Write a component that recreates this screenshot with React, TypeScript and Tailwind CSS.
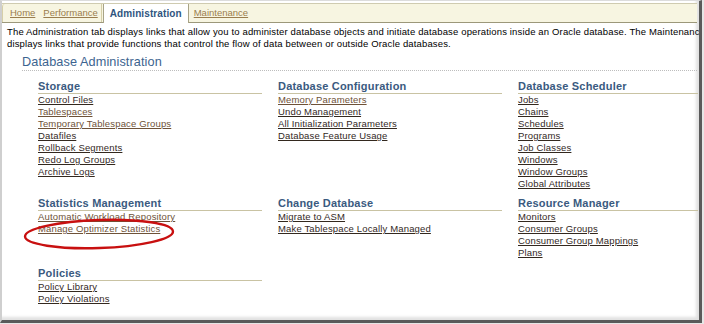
import React from "react";

type LinkItem = { t: string; v?: boolean };
type Section = { title: string; links: LinkItem[] };

const row1: Section[] = [
  {
    title: "Storage",
    links: [
      { t: "Control Files" },
      { t: "Tablespaces", v: true },
      { t: "Temporary Tablespace Groups", v: true },
      { t: "Datafiles" },
      { t: "Rollback Segments" },
      { t: "Redo Log Groups" },
      { t: "Archive Logs" },
    ],
  },
  {
    title: "Database Configuration",
    links: [
      { t: "Memory Parameters", v: true },
      { t: "Undo Management" },
      { t: "All Initialization Parameters" },
      { t: "Database Feature Usage" },
    ],
  },
  {
    title: "Database Scheduler",
    links: [
      { t: "Jobs" },
      { t: "Chains" },
      { t: "Schedules" },
      { t: "Programs" },
      { t: "Job Classes" },
      { t: "Windows" },
      { t: "Window Groups" },
      { t: "Global Attributes" },
    ],
  },
];

const row2: Section[] = [
  {
    title: "Statistics Management",
    links: [{ t: "Automatic Workload Repository", v: true }, { t: "Manage Optimizer Statistics", v: true }],
  },
  {
    title: "Change Database",
    links: [{ t: "Migrate to ASM" }, { t: "Make Tablespace Locally Managed" }],
  },
  {
    title: "Resource Manager",
    links: [{ t: "Monitors" }, { t: "Consumer Groups" }, { t: "Consumer Group Mappings" }, { t: "Plans" }],
  },
];

const row3: Section[] = [
  {
    title: "Policies",
    links: [{ t: "Policy Library" }, { t: "Policy Violations" }],
  },
];

function SectionBlock({ s }: { s: Section }) {
  return (
    <div className="flex flex-col">
      <div className="text-[11px] font-bold leading-[14px] text-[#3a5a80] border-b border-[#c9c3a3] tracking-[0.2px]">
        {s.title}
      </div>
      <div className="flex flex-col">
        {s.links.map((l) => (
          <a
            key={l.t}
            className={
              "text-[9.5px] leading-[12px] tracking-[0.15px] underline underline-offset-[1px] whitespace-nowrap self-start " +
              (l.v ? "text-[#6e5238]" : "text-[#33281e]")
            }
          >
            {l.t}
          </a>
        ))}
      </div>
    </div>
  );
}

function Row({ sections, className }: { sections: Section[]; className: string }) {
  return (
    <div className={"grid grid-cols-[224px_224px_180px] gap-x-4 ml-[36px] " + className}>
      {sections.map((s) => (
        <SectionBlock key={s.title} s={s} />
      ))}
    </div>
  );
}

export default function App() {
  return (
    <div
      className="w-[704px] h-[324px] bg-[#e6e6e6] overflow-hidden relative"
      style={{ fontFamily: '"Liberation Sans", Arial, sans-serif' }}
    >
      <div className="w-[702px] h-[323px] bg-white border-r-[3px] border-b-[3px] border-[#5a5a5a] border-l-2 border-l-[#cfcfcf] border-t border-t-[#dcdcdc] shadow-[inset_-3px_-3px_3px_rgba(0,0,0,0.12)] flex flex-col relative">
        {/* Tab strip */}
        <div className="mt-[2px] h-[20px] bg-[#f7f5e1] border-t border-t-[#cfcbb0] border-b border-b-[#9c987a] flex items-stretch mr-[2px]">
          <div className="flex items-center gap-[8px] pl-[7px] pr-[3px] border-r border-[#d6cfa8] border-l border-l-[#d6cfa8] rounded-tl-[3px]">
            <a className="text-[9.5px] underline text-[#9a7d4e]">Home</a>
            <a className="text-[9.5px] underline text-[#9a7d4e]">Performance</a>
          </div>
          <div className="flex items-center px-[6px] bg-white border-x border-[#a8a386] -mb-px ml-[1px]">
            <span className="text-[10px] font-bold text-[#2f5580] tracking-[0.1px]">Administration</span>
          </div>
          <div className="flex items-center pl-[5px]">
            <a className="text-[9.5px] underline text-[#9a7d4e]">Maintenance</a>
          </div>
        </div>

        {/* Description */}
        <div className="mt-[3px] pl-[5px] text-[9.5px] leading-[12px] tracking-[0.15px] text-black overflow-hidden whitespace-nowrap">
          <div>
            The Administration tab displays links that allow you to administer database objects and initiate database
            operations inside an Oracle database. The Maintenance tab
          </div>
          <div>displays links that provide functions that control the flow of data between or outside Oracle databases.</div>
        </div>

        {/* Heading */}
        <div className="mt-[4px] ml-[20px] mr-[2px] border-b border-dotted border-[#bdbdbd]">
          <div className="text-[12.7px] leading-[16px] text-[#3c6490] tracking-[0.1px]">Database Administration</div>
        </div>

        <Row sections={row1} className="mt-[8px]" />
        <Row sections={row2} className="mt-[6px]" />
        <Row sections={row3} className="mt-[7px]" />

        <svg className="absolute left-0 top-0 pointer-events-none" width="704" height="324">
          <ellipse
            cx="97"
            cy="233"
            rx="74"
            ry="14"
            fill="none"
            stroke="#c81010"
            strokeWidth="2.4"
            transform="rotate(-2 97 233)"
          />
        </svg>
      </div>
    </div>
  );
}
